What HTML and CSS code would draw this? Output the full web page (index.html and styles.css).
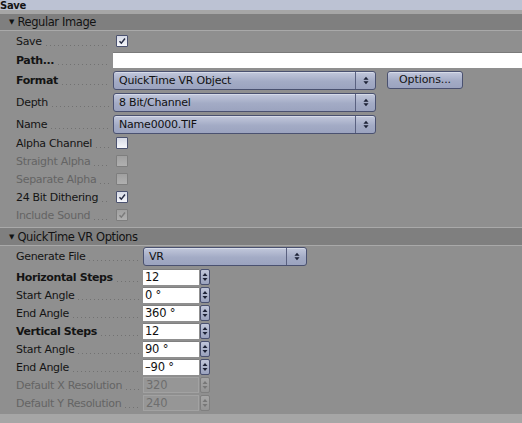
FILE: index.html
```html
<!DOCTYPE html>
<html>
<head>
<meta charset="utf-8">
<link rel="stylesheet" href="styles.css">
</head>
<body>
<div class="title"><span>Save</span></div>
<div class="strip"></div>
<div class="head head-first"><span class="tri">&#9660;</span>Regular Image</div>
<div class="sect sect1">
  <div class="row rc"><div class="lead"><span class="lbl">Save</span><span class="dots"></span></div><span class="cb on"><svg viewBox="0 0 12 12"><path d="M3 6.2 L5.2 8.6 L9.6 3"/></svg></span></div>
  <div class="row rp"><div class="lead"><span class="lbl b">Path...</span><span class="dots"></span></div><span class="path"></span></div>
  <div class="row rd"><div class="lead"><span class="lbl b">Format</span><span class="dots"></span></div><span class="dd wide"><span class="ddt">QuickTime VR Object</span><span class="dda"><svg viewBox="0 0 7 10"><path d="M3.5 0.5 L6.5 4 L0.5 4 Z M0.5 6 L6.5 6 L3.5 9.5 Z"/></svg></span></span><span class="btn">Options...</span></div>
  <div class="row rd"><div class="lead"><span class="lbl">Depth</span><span class="dots"></span></div><span class="dd wide"><span class="ddt">8 Bit/Channel</span><span class="dda"><svg viewBox="0 0 7 10"><path d="M3.5 0.5 L6.5 4 L0.5 4 Z M0.5 6 L6.5 6 L3.5 9.5 Z"/></svg></span></span></div>
  <div class="row rd rd2"><div class="lead"><span class="lbl">Name</span><span class="dots"></span></div><span class="dd wide"><span class="ddt">Name0000.TIF</span><span class="dda"><svg viewBox="0 0 7 10"><path d="M3.5 0.5 L6.5 4 L0.5 4 Z M0.5 6 L6.5 6 L3.5 9.5 Z"/></svg></span></span></div>
  <div class="row rc rc2"><div class="lead"><span class="lbl">Alpha Channel</span><span class="dots"></span></div><span class="cb"></span></div>
  <div class="row rc off"><div class="lead"><span class="lbl">Straight Alpha</span><span class="dots"></span></div><span class="cb"></span></div>
  <div class="row rc off"><div class="lead"><span class="lbl">Separate Alpha</span><span class="dots"></span></div><span class="cb"></span></div>
  <div class="row rc"><div class="lead"><span class="lbl">24 Bit Dithering</span><span class="dots"></span></div><span class="cb on"><svg viewBox="0 0 12 12"><path d="M3 6.2 L5.2 8.6 L9.6 3"/></svg></span></div>
  <div class="row rc off"><div class="lead"><span class="lbl">Include Sound</span><span class="dots"></span></div><span class="cb on"><svg viewBox="0 0 12 12"><path d="M3 6.2 L5.2 8.6 L9.6 3"/></svg></span></div>
</div>
<div class="head head-second"><span class="tri">&#9660;</span>QuickTime VR Options</div>
<div class="sect sect2">
  <div class="row rd"><div class="lead"><span class="lbl">Generate File</span><span class="dots"></span></div><span class="dd mid"><span class="ddt">VR</span><span class="dda"><svg viewBox="0 0 7 10"><path d="M3.5 0.5 L6.5 4 L0.5 4 Z M0.5 6 L6.5 6 L3.5 9.5 Z"/></svg></span></span></div>
  <div class="row rn"><div class="lead"><span class="lbl b">Horizontal Steps</span><span class="dots"></span></div><span class="num">12</span><span class="spin"><svg viewBox="0 0 6 10"><path d="M3 1 L5.5 4 L0.5 4 Z M0.5 6 L5.5 6 L3 9 Z"/></svg></span></div>
  <div class="row rn"><div class="lead"><span class="lbl">Start Angle</span><span class="dots"></span></div><span class="num">0 °</span><span class="spin"><svg viewBox="0 0 6 10"><path d="M3 1 L5.5 4 L0.5 4 Z M0.5 6 L5.5 6 L3 9 Z"/></svg></span></div>
  <div class="row rn"><div class="lead"><span class="lbl">End Angle</span><span class="dots"></span></div><span class="num">360 °</span><span class="spin"><svg viewBox="0 0 6 10"><path d="M3 1 L5.5 4 L0.5 4 Z M0.5 6 L5.5 6 L3 9 Z"/></svg></span></div>
  <div class="row rn"><div class="lead"><span class="lbl b">Vertical Steps</span><span class="dots"></span></div><span class="num">12</span><span class="spin"><svg viewBox="0 0 6 10"><path d="M3 1 L5.5 4 L0.5 4 Z M0.5 6 L5.5 6 L3 9 Z"/></svg></span></div>
  <div class="row rn"><div class="lead"><span class="lbl">Start Angle</span><span class="dots"></span></div><span class="num">90 °</span><span class="spin"><svg viewBox="0 0 6 10"><path d="M3 1 L5.5 4 L0.5 4 Z M0.5 6 L5.5 6 L3 9 Z"/></svg></span></div>
  <div class="row rn"><div class="lead"><span class="lbl">End Angle</span><span class="dots"></span></div><span class="num">–90 °</span><span class="spin"><svg viewBox="0 0 6 10"><path d="M3 1 L5.5 4 L0.5 4 Z M0.5 6 L5.5 6 L3 9 Z"/></svg></span></div>
  <div class="row rn off"><div class="lead"><span class="lbl">Default X Resolution</span><span class="dots"></span></div><span class="num">320</span><span class="spin"><svg viewBox="0 0 6 10"><path d="M3 1 L5.5 4 L0.5 4 Z M0.5 6 L5.5 6 L3 9 Z"/></svg></span></div>
  <div class="row rn off"><div class="lead"><span class="lbl">Default Y Resolution</span><span class="dots"></span></div><span class="num">240</span><span class="spin"><svg viewBox="0 0 6 10"><path d="M3 1 L5.5 4 L0.5 4 Z M0.5 6 L5.5 6 L3 9 Z"/></svg></span></div>
</div>
<div class="foot"></div>
</body>
</html>
```
FILE: styles.css
```css
* { box-sizing: border-box; }
html, body { margin: 0; padding: 0; }
body {
  width: 522px;
  height: 423px;
  overflow: hidden;
  background: #8f8f8f;
  font-family: "DejaVu Sans", "Open Sans", sans-serif;
  font-size: 11px;
  letter-spacing: -0.3px;
  color: #141414;
}
.title {
  height: 10px;
  background: #bcc2d3;
  font-weight: bold;
  font-size: 10px;
  position: relative;
  z-index: 1;
}
.title span {
  display: block;
  line-height: 12px;
  padding-left: 0;
}
.strip { height: 4px; background: #a6a6a6; }
.head {
  height: 17px;
  background: #7f7f7f;
  border-bottom: 1px solid #a9a9a9;
  display: flex;
  align-items: center;
  font-size: 11.5px;
  letter-spacing: -0.4px;
  color: #121212;
  padding-left: 9px;
  line-height: 16px;
}
.head-second { border-top: 1px solid #a9a9a9; height: 19px; }
.tri { font-size: 7px; margin-right: 3px; letter-spacing: 0; }
.sect1 { padding-top: 3px; height: 196px; }
.sect2 { padding-top: 1px; height: 168px; }
.row {
  display: flex;
  align-items: center;
  padding-left: 16px;
}
.lead {
  display: flex;
  width: 97px;
  flex: none;
  align-self: stretch;
  align-items: center;
}
.sect2 .lead { width: 127px; }
.lbl { white-space: nowrap; }
.lbl.b { font-weight: bold; letter-spacing: -0.4px; }
.dots {
  flex: 1;
  height: 1px;
  margin: 8px 4px 0 4px;
  background: linear-gradient(to right, #727272 1px, transparent 1px) repeat-x left / 4px 1px;
}
.off .lbl { color: #646464; }
.rc { height: 14px; margin-bottom: 4px; }
.rc2 { margin-top: 2px; }
.rp { height: 16px; margin-top: 4px; margin-bottom: 3px; }
.rd { height: 19px; margin-bottom: 3px; }
.rd2 { margin-bottom: 2px; }
.rn { height: 16px; margin-bottom: 2px; }
.sect2 .rd { margin-bottom: 3px; }
.cb {
  width: 12px;
  height: 12px;
  margin-left: 3px;
  border: 1px solid #4b5270;
  border-radius: 1px;
  background: linear-gradient(#d6dae6, #f6f7fb);
  display: flex;
}
.cb svg { width: 10px; height: 10px; }
.cb path { fill: none; stroke: #262c44; stroke-width: 1.8; }
.off .cb { border-color: #7e7e7e; background: linear-gradient(#a0a0a0, #b0b0b0); }
.off .cb path { stroke: #7b7b7b; }
.path {
  flex: 1;
  height: 16px;
  background: #fff;
  border-top: 1px solid #7a7a7a;
}
.dd {
  height: 19px;
  display: flex;
  border: 1px solid #4a5170;
  border-radius: 3px;
  background: linear-gradient(#c2c8dc, #a3abc5 55%, #9ba3bf);
  box-shadow: inset 0 1px 0 #d6dbe8;
}
.dd.wide { width: 263px; }
.dd.mid { width: 164px; }
.ddt {
  flex: 1;
  padding-left: 5px;
  line-height: 17px;
  font-size: 11px;
  letter-spacing: -0.2px;
  color: #111;
}
.dda {
  width: 20px;
  border-left: 1px solid #5a6180;
  display: flex;
  align-items: center;
  justify-content: center;
}
.dda svg { width: 6px; height: 9px; }
.dda path, .spin path { fill: #1d2236; }
.btn {
  margin-left: 11px;
  width: 76px;
  height: 18px;
  border: 1px solid #4a5170;
  border-radius: 3px;
  background: linear-gradient(#c2c8dc, #a3abc5 55%, #9ba3bf);
  box-shadow: inset 0 1px 0 #d6dbe8;
  text-align: center;
  line-height: 16px;
  font-size: 11px;
  letter-spacing: -0.1px;
  align-self: flex-start;
}
.num {
  width: 56px;
  height: 16px;
  background: #fff;
  border-top: 1px solid #808080;
  padding-left: 2px;
  line-height: 15px;
  font-size: 11.5px;
  letter-spacing: -0.2px;
  color: #111;
}
.spin {
  width: 10px;
  height: 16px;
  margin-left: 1px;
  border: 1px solid #4a5170;
  border-radius: 2px;
  background: linear-gradient(#c0c6da, #9aa2bd);
  display: flex;
  align-items: center;
  justify-content: center;
}
.spin svg { width: 6px; height: 10px; }
.off .num { background: #969696; color: #6e6e6e; border: 1px solid #a2a2a2; }
.off .spin { border-color: #7f7f7f; background: linear-gradient(#a6a6a6, #959595); }
.off .spin path { fill: #777; }
.foot { height: 12px; background: #a6a6a6; }
```
